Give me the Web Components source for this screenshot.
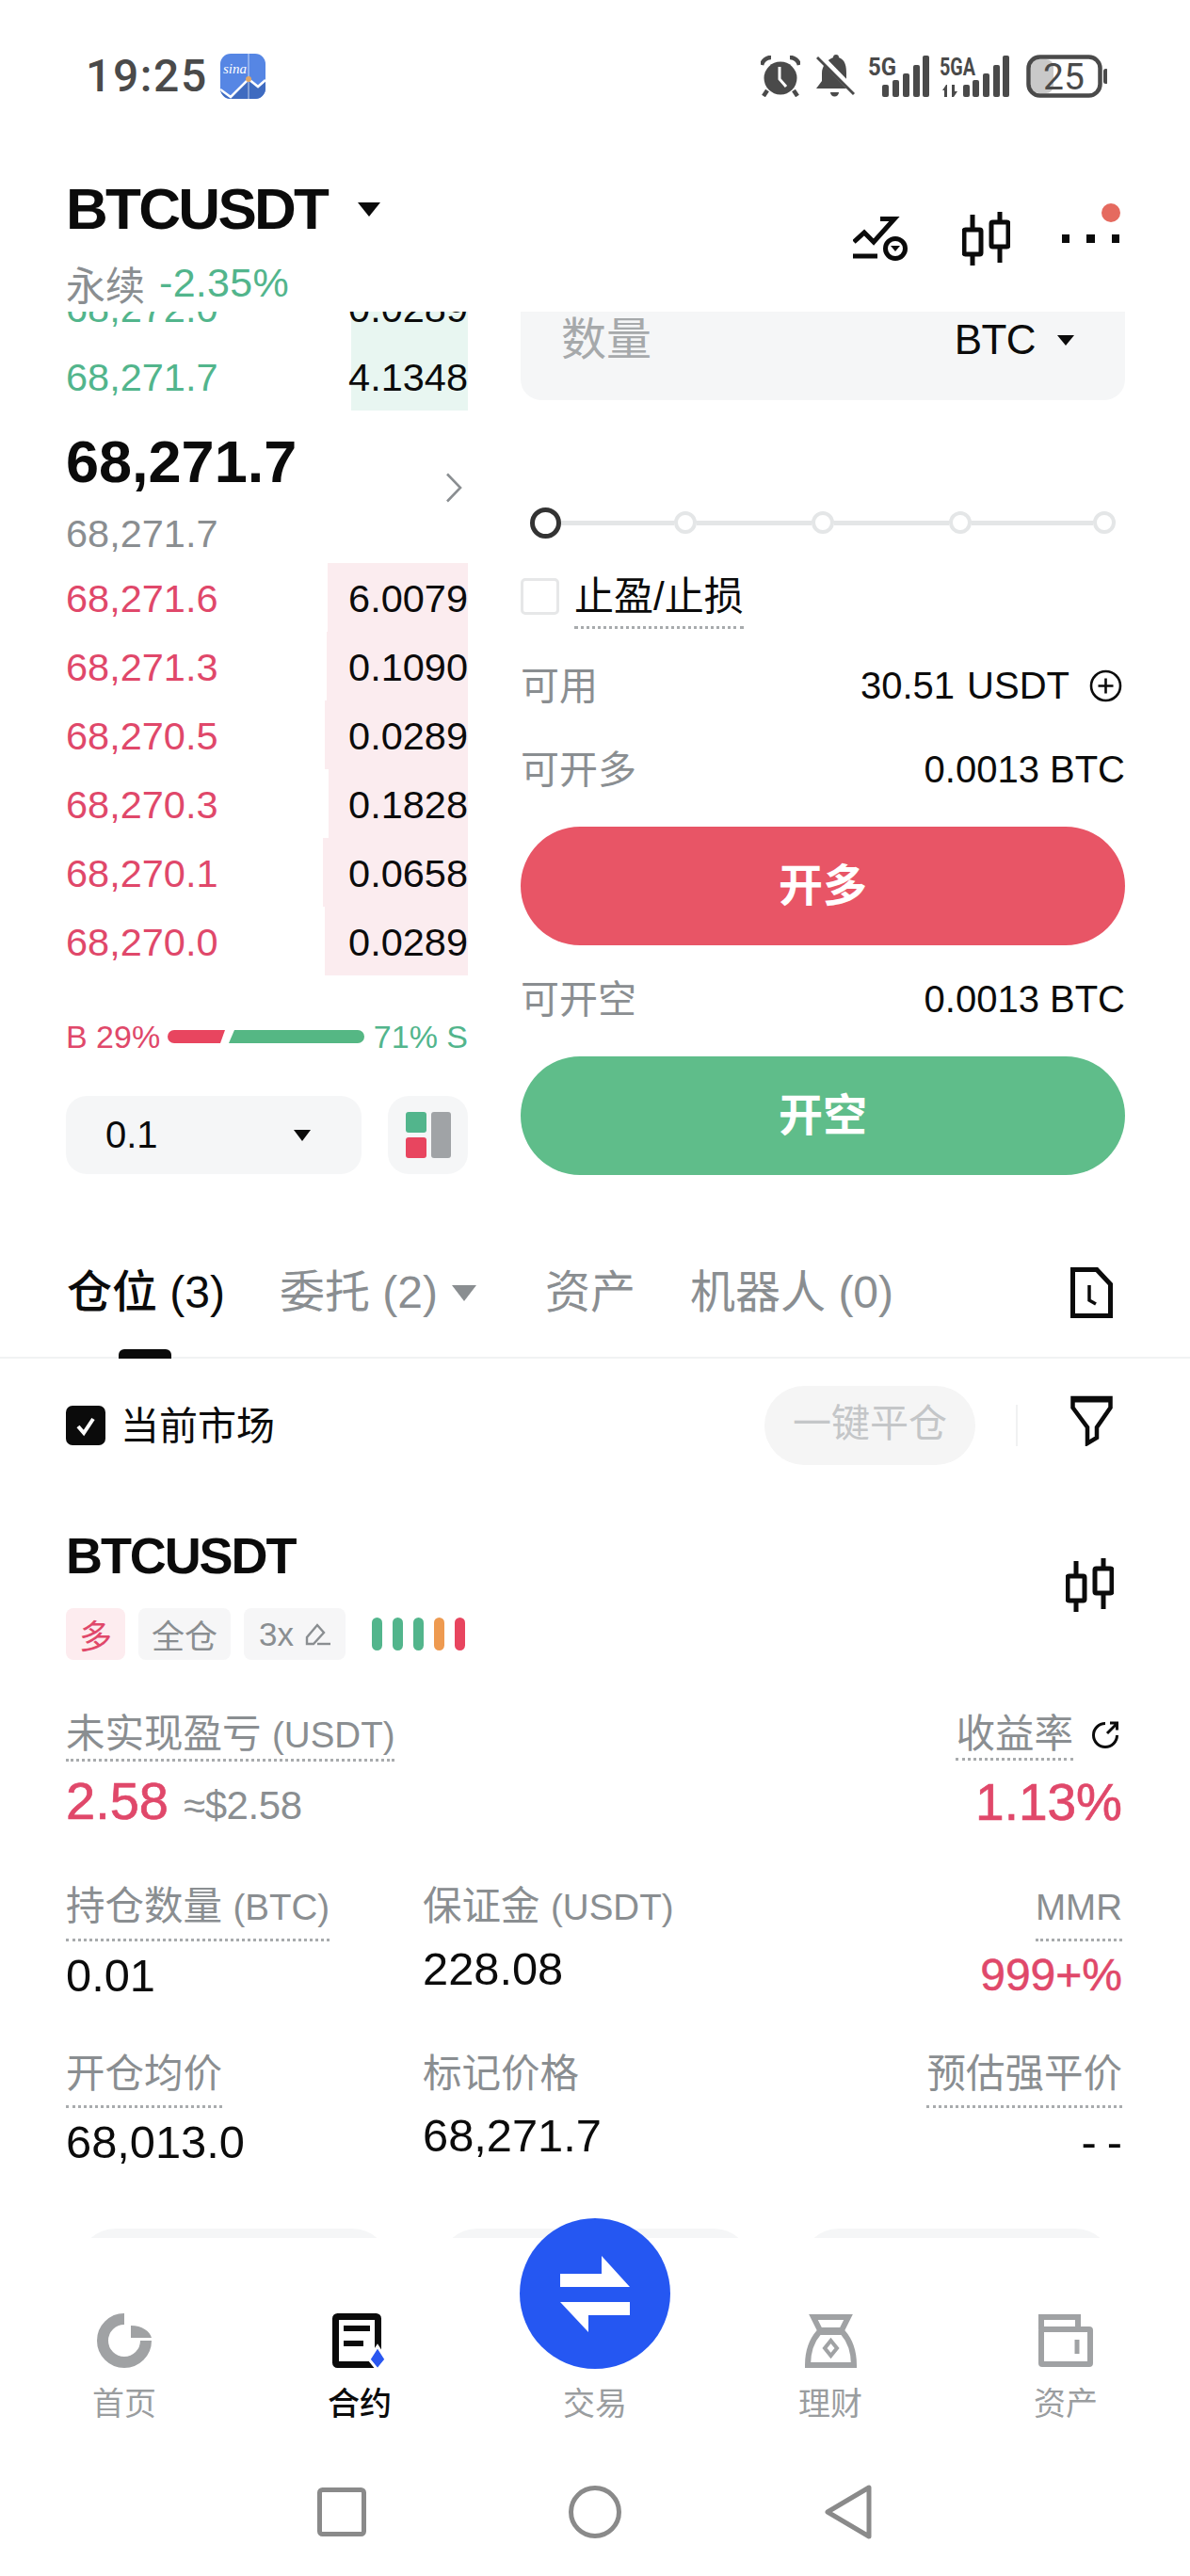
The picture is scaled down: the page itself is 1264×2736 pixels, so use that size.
<!DOCTYPE html>
<html lang="zh">
<head>
<meta charset="utf-8">
<title>BTCUSDT</title>
<style>
  html, body { margin: 0; background: #fff; }
  body {
    width: 1264px;
    height: 2736px;
    overflow: hidden;
    font-family: "Liberation Sans", "Noto Sans CJK SC", sans-serif;
    color: #0b0b0b;
  }
</style>
</head>
<body>
<trade-app></trade-app>

<script>
const GREY = "#8a8e91";
const RED = "#e0486a";
const GREEN = "#52b58c";

const ICONS = {
  chart: `<svg width="58" height="47" viewBox="0 0 58 47" fill="none" stroke="#0b0b0b" stroke-width="5">
    <polyline points="1,27 12,17 22,27 44,2.5 29,2.5"/><rect x="0" y="39.5" width="26" height="5" fill="#0b0b0b" stroke="none"/>
    <circle cx="45" cy="34" r="10.5"/><path d="M40 31h10l-5 6z" fill="#0b0b0b" stroke="none"/></svg>`,
  candle: `<svg width="51" height="57" viewBox="0 0 51 57" fill="none" stroke="#0b0b0b" stroke-width="5">
    <rect x="2" y="19" width="18" height="26" rx="1.5"/><rect x="31" y="11" width="18" height="26" rx="1.5"/>
    <path d="M11 3v16M11 45v12M40 0v11M40 37v17"/></svg>`,
  doc: `<svg width="45" height="54" viewBox="0 0 45 54" fill="none" stroke="#0b0b0b" stroke-width="5">
    <path d="M2.5 2.5H28L42.5 18V51.5H2.5Z"/><polyline points="20,19 20,35 27,39" stroke-width="3.5"/></svg>`,
  filter: `<svg width="45" height="54" viewBox="0 0 45 54" fill="none" stroke="#0b0b0b" stroke-width="4.5">
    <path d="M2.5 3H42.5V13L28 34V45L18 51V34L2.5 13Z"/><path d="M2 5H43" stroke-width="5"/></svg>`,
  check: `<svg width="42" height="42" viewBox="0 0 42 42"><rect width="42" height="42" rx="7" fill="#0b0b0b"/>
    <polyline points="13,22 19,29 29,14" fill="none" stroke="#fff" stroke-width="4"/></svg>`,
  pencil: `<svg width="27" height="24" viewBox="0 0 27 24" fill="none" stroke="${GREY}" stroke-width="2.4">
    <path d="M2 22V15L13 2L20 10L9 22Z"/><path d="M13 22H27"/></svg>`,
  refresh: `<svg width="30" height="30" viewBox="0 0 30 30" fill="none" stroke="#0b0b0b" stroke-width="3">
    <path d="M15 3.5A12.5 12.5 0 1 0 27.5 16"/><path d="M17 14L27 4M20 3H27.5V10.5"/></svg>`,
  plus: `<svg width="35" height="35" viewBox="0 0 35 35" fill="none" stroke="#0b0b0b" stroke-width="2.6">
    <circle cx="17.5" cy="17.5" r="15.5"/><path d="M17.5 9.5v16M9.5 17.5h16"/></svg>`,
  chevron: `<svg width="18" height="32" viewBox="0 0 18 32" fill="none" stroke="${GREY}" stroke-width="2.6"><path d="M2 1.5L16 16L2 30.5"/></svg>`,
  layout: `<svg width="48" height="49" viewBox="0 0 48 49"><rect width="22" height="22" rx="3" fill="${GREEN}"/>
    <rect y="27" width="22" height="22" rx="3" fill="#e8455f"/><rect x="27" width="21" height="49" rx="3" fill="#a0a3a6"/></svg>`,
  home: `<svg width="58" height="58" viewBox="0 0 58 58" fill="none" stroke="#a0a2a4" stroke-width="12">
    <path d="M29 6A23 23 0 1 0 52 29"/><path d="M36 13V26H58C56 19 48 13 36 13Z" fill="#a0a2a4" stroke="none"/></svg>`,
  contract: `<svg width="58" height="58" viewBox="0 0 58 58" fill="none">
    <rect x="3.5" y="3.5" width="45" height="51" rx="2" stroke="#0b0b0b" stroke-width="7"/>
    <rect x="12" y="13" width="28" height="6" fill="#0b0b0b"/><rect x="12" y="29" width="21" height="6" fill="#0b0b0b"/>
    <path d="M48 35L57 49L48 60L39 49Z" fill="#2a57f0" stroke="#fff" stroke-width="3"/></svg>`,
  bag: `<svg width="55" height="57" viewBox="0 0 55 57" fill="none" stroke="#a0a2a4" stroke-width="6">
    <path d="M9 3H46L39 17H16Z"/><path d="M15 19H40C48 28 52 38 52 54H3C3 38 7 28 15 19Z"/>
    <path d="M27.5 28L34 36L27.5 44L21 36Z" stroke-width="4"/></svg>`,
  wallet: `<svg width="58" height="56" viewBox="0 0 58 56" fill="none" stroke="#a0a2a4" stroke-width="6">
    <path d="M3 16V3H42V16"/><rect x="3" y="16" width="52" height="37" rx="1"/><path d="M41 27V42" stroke-width="5"/></svg>`,
  swap: `<svg width="74" height="81" viewBox="0 0 74 81" fill="#fff">
    <polygon points="44,0 74,33 0,33 0,19 44,19"/><polygon points="0,49 74,49 74,63 30,63 30,81"/></svg>`,
  square: `<svg width="52" height="52" viewBox="0 0 52 52" fill="none" stroke="#8a8a8a" stroke-width="5"><rect x="2.5" y="2.5" width="47" height="47" rx="3"/></svg>`,
  circle: `<svg width="56" height="56" viewBox="0 0 56 56" fill="none" stroke="#8a8a8a" stroke-width="5"><circle cx="28" cy="28" r="25.5"/></svg>`,
  back: `<svg width="50" height="58" viewBox="0 0 50 58" fill="none" stroke="#8a8a8a" stroke-width="5" stroke-linejoin="round"><path d="M47 3V55L3 29Z"/></svg>`,
  sina: `<svg width="48" height="48" viewBox="0 0 48 48"><defs><clipPath id="r"><rect width="48" height="48" rx="11"/></clipPath></defs>
    <g clip-path="url(#r)"><rect width="48" height="48" fill="#5686e4"/><path d="M0 38L11 46L30 27L40 35L48 28V48H0Z" fill="#3f6bc0"/>
    <polyline points="0,38 11,46 30,27 40,35 48,28" fill="none" stroke="#fff" stroke-width="2.5"/>
    <path d="M30 0V48" stroke="#fff" stroke-width="1" opacity=".7"/><circle cx="30" cy="27" r="3" fill="#e0a868"/>
    <text x="3" y="21" font-family="Liberation Serif" font-style="italic" font-size="15" fill="#fff">sina</text></g></svg>`,
  alarm: `<svg width="42" height="44" viewBox="0 0 42 44"><circle cx="21" cy="24" r="17.5" fill="#4a4a4a"/>
    <path d="M1 10A10 10 0 0 1 11 2M41 10A10 10 0 0 0 31 2M7 37L3 43M35 37L39 43" fill="none" stroke="#4a4a4a" stroke-width="4.5"/>
    <polyline points="20,12 20,25 27,33" fill="none" stroke="#fff" stroke-width="3"/></svg>`,
  bell: `<svg width="41" height="46" viewBox="0 0 41 46"><path d="M18 3A3 3 0 0 1 24 3C31 6 32 12 32 20V28L38 36H0L6 28V20C6 12 11 6 18 3ZM15 40H24A4.500 4.500 0 0 1 15 40Z" fill="#4a4a4a"/>
    <path d="M3 1L41 40" stroke="#fff" stroke-width="7"/><path d="M1 3L40 42" stroke="#4a4a4a" stroke-width="3"/></svg>`,
  signal5g: `<svg width="65" height="46" viewBox="0 0 65 46" fill="#4a4a4a">
    <text x="0" y="22" font-family="Roboto" font-weight="700" font-size="25" textLength="30" lengthAdjust="spacingAndGlyphs">5G</text>
    <rect x="15" y="32" width="7" height="13" rx="2"/><rect x="26" y="27" width="7" height="18" rx="2"/><rect x="37" y="20" width="7" height="25" rx="2"/><rect x="48" y="11" width="7" height="34" rx="2"/><rect x="58" y="1" width="7" height="44" rx="2"/></svg>`,
  signal5ga: `<svg width="74" height="46" viewBox="0 0 74 46" fill="#4a4a4a">
    <text x="0" y="22" font-family="Roboto" font-weight="700" font-size="25" textLength="38" lengthAdjust="spacingAndGlyphs">5GA</text>
    <path d="M3 38l4-6 1 0v13h-3v-7zM13 32h3v7h3l-4 6h-2z"/>
    <rect x="25" y="32" width="7" height="13" rx="2"/><rect x="35" y="27" width="7" height="18" rx="2"/><rect x="46" y="20" width="7" height="25" rx="2"/><rect x="57" y="11" width="7" height="34" rx="2"/><rect x="67" y="1" width="7" height="44" rx="2"/></svg>`,
  battery: `<svg width="86" height="46" viewBox="0 0 86 46" fill="none"><rect x="5" y="5" width="24" height="36" rx="8" fill="#c9c9c9"/>
    <rect x="2.500" y="2.500" width="76" height="41" rx="12" stroke="#4a4a4a" stroke-width="4.500"/><rect x="82" y="15" width="5" height="16" rx="2.500" fill="#4a4a4a"/>
    <text x="40" y="37" text-anchor="middle" font-family="Roboto" font-size="39" fill="#4a4a4a">25</text></svg>`,
};

class UiIcon extends HTMLElement {
  constructor() {
    super();
    this.attachShadow({ mode: "open" }).innerHTML = `
      <style>
        :host { display: inline-flex; flex: none; line-height: 0; }
      </style>
      ${ICONS[this.getAttribute("name")] || ""}
    `;
  }
}
customElements.define("ui-icon", UiIcon);

class StatusBar extends HTMLElement {
  constructor() {
    super();
    this.attachShadow({ mode: "open" }).innerHTML = `
      <style>
        :host { display: flex; align-items: center; height: 162px; padding: 0 88px 0 91px; }
        .time { font: 500 48px/50px Roboto, sans-serif; letter-spacing: 1.6px; color: #4a4a4a; margin-right: 13px; }
        .right { margin-left: auto; display: flex; align-items: center; }
      </style>
      <span class="time">19:25</span>
      <ui-icon name="sina"></ui-icon>
      <div class="right">
        <ui-icon name="alarm" style="margin-right:17px"></ui-icon>
        <ui-icon name="bell" style="margin-right:14px"></ui-icon>
        <ui-icon name="signal5g" style="margin-right:11px"></ui-icon>
        <ui-icon name="signal5ga" style="margin-right:18px"></ui-icon>
        <ui-icon name="battery"></ui-icon>
      </div>
    `;
  }
}
customElements.define("status-bar", StatusBar);

class MarketHeader extends HTMLElement {
  constructor() {
    super();
    this.attachShadow({ mode: "open" }).innerHTML = `
      <style>
        :host { position: relative; z-index: 1; display: flex; justify-content: space-between; height: 169px; padding: 25px 75px 0 70px; box-sizing: border-box; }
        .title { display: flex; align-items: center; height: 70px; font-size: 62px; line-height: 70px; font-weight: 700; letter-spacing: -2.7px; }
        .caret { width: 0; height: 0; margin-left: 33px; border: 12px solid transparent; border-top: 15px solid #0b0b0b; border-bottom: 0; }
        .sub { display: flex; align-items: center; height: 40px; margin-top: 23px; font-size: 42px; color: ${GREY}; }
        .sub b { font-size: 43px; font-weight: 400; color: ${GREEN}; margin-left: 15px; letter-spacing: .3px; }
        .tools { display: flex; align-items: center; height: 57px; margin-top: 38px; }
        .more { position: relative; display: flex; gap: 18px; margin-left: 55px; }
        .more i { width: 8.5px; height: 8.5px; background: #0b0b0b; }
        .more .dot { position: absolute; right: -1px; top: -33px; width: 20px; height: 20px; border-radius: 50%; background: #e56a5f; }
      </style>
      <div>
        <div class="title">BTCUSDT<span class="caret"></span></div>
        <div class="sub">永续<b>-2.35%</b></div>
      </div>
      <div class="tools">
        <ui-icon name="chart" style="margin-right:58px"></ui-icon>
        <ui-icon name="candle"></ui-icon>
        <div class="more"><i></i><i></i><i></i><span class="dot"></span></div>
      </div>
    `;
  }
}
customElements.define("market-header", MarketHeader);

class OrderRow extends HTMLElement {
  constructor() {
    super();
    const bid = this.getAttribute("side") === "bid";
    this.attachShadow({ mode: "open" }).innerHTML = `
      <style>
        :host {
          display: flex; justify-content: space-between; align-items: center;
          height: 73px; box-sizing: border-box; padding-top: 2px; font-size: 41.5px; line-height: 70px;
          color: ${bid ? GREEN : RED};
          background: linear-gradient(to left, ${bid ? "#e8f6f1" : "#fbecef"} ${this.getAttribute("depth")}px, transparent 0);
        }
        .qty { color: #0b0b0b; }
      </style>
      <span><slot></slot></span>
      <span class="qty">${this.getAttribute("qty")}</span>
    `;
  }
}
customElements.define("order-row", OrderRow);

class OrderBook extends HTMLElement {
  constructor() {
    super();
    this.attachShadow({ mode: "open" }).innerHTML = `
      <style>
        :host { display: block; margin-top: -41px; }
        .mid { display: grid; grid-template-columns: 1fr auto; height: 162px; box-sizing: border-box; padding: 19px 6px 0 0; }
        .last { font-size: 63px; line-height: 70px; font-weight: 700; }
        .mark { font-size: 41.5px; line-height: 50px; color: ${GREY}; margin-top: 17px; }
        ui-icon { margin-top: 47px; }
        .ratio { display: flex; align-items: center; height: 40px; margin-top: 45px; font-size: 34px; }
        .ratio .b { color: ${RED}; width: 104px; }
        .ratio .s { color: ${GREEN}; margin-left: auto; }
        .bars { display: flex; gap: 4px; margin-left: 4px; }
        .bars i { display: block; height: 14px; }
        .bars .red { width: 61px; background: #e8455f; border-radius: 7px 0 0 7px; clip-path: polygon(0 0, 100% 0, calc(100% - 5px) 100%, 0 100%); }
        .bars .green { width: 144px; background: #55b784; border-radius: 0 7px 7px 0; clip-path: polygon(6px 0, 100% 0, 100% 100%, 0 100%); }
        .controls { display: flex; gap: 28px; margin-top: 43px; }
        .select { display: flex; align-items: center; justify-content: space-between; width: 314px; height: 83px; box-sizing: border-box; padding: 0 54px 0 42px; border-radius: 22px; background: #f5f6f7; font-size: 40px; }
        .select i { width: 0; height: 0; border: 9px solid transparent; border-top: 12px solid #0b0b0b; border-bottom: 0; }
        .mode { display: flex; align-items: center; justify-content: center; width: 85px; height: 83px; border-radius: 22px; background: #f5f6f7; }
        .mode ui-icon { margin: 0; }
      </style>
      <order-row side="bid" depth="124" qty="0.0289">68,272.0</order-row>
      <order-row side="bid" depth="124" qty="4.1348">68,271.7</order-row>
      <div class="mid">
        <div>
          <div class="last">68,271.7</div>
          <div class="mark">68,271.7</div>
        </div>
        <ui-icon name="chevron"></ui-icon>
      </div>
      <order-row depth="149" qty="6.0079">68,271.6</order-row>
      <order-row depth="150" qty="0.1090">68,271.3</order-row>
      <order-row depth="152" qty="0.0289">68,270.5</order-row>
      <order-row depth="148" qty="0.1828">68,270.3</order-row>
      <order-row depth="154" qty="0.0658">68,270.1</order-row>
      <order-row depth="152" qty="0.0289">68,270.0</order-row>
      <div class="ratio">
        <span class="b">B 29%</span>
        <span class="bars"><i class="red"></i><i class="green"></i></span>
        <span class="s">71% S</span>
      </div>
      <div class="controls">
        <div class="select">0.1<i></i></div>
        <div class="mode"><ui-icon name="layout"></ui-icon></div>
      </div>
    `;
  }
}
customElements.define("order-book", OrderBook);

class OrderForm extends HTMLElement {
  constructor() {
    super();
    this.attachShadow({ mode: "open" }).innerHTML = `
      <style>
        :host { display: block; font-size: 41px; }
        .qty { display: flex; justify-content: space-between; height: 124px; margin-top: -30px; box-sizing: border-box; padding: 36px 54px 0 43px; border-radius: 22px; background: #f5f6f7; line-height: 48px; }
        .qty .ph { font-size: 48px; color: #a6a9ab; }
        .qty .unit { display: flex; align-items: center; height: 48px; font-size: 44px; letter-spacing: -.6px; }
        .qty .unit i { width: 0; height: 0; margin-left: 23px; border: 9px solid transparent; border-top: 11px solid #0b0b0b; border-bottom: 0; }
        .slider { display: flex; align-items: center; height: 40px; margin-top: 110px; padding: 0 10px; }
        .slider i { height: 5px; background: #e4e6e7; }
        .slider b { width: 24px; height: 24px; flex: none; box-sizing: border-box; border: 4px solid #e4e6e7; border-radius: 50%; }
        .slider b:first-child { width: 33px; height: 33px; border: 5px solid #333; }
        .tpsl { display: flex; height: 40px; margin-top: 37px; }
        .box { width: 41px; height: 39px; box-sizing: border-box; border: 3px solid #e6e7e8; border-radius: 5px; margin: 2px 16px 0 0; }
        .tpsl span { font-size: 42px; line-height: 44px; height: 44px; padding-bottom: 9px; border-bottom: 3px dotted #a8abad; }
        .row { display: flex; justify-content: space-between; align-items: center; height: 50px; color: ${GREY}; }
        .row .lab { margin-bottom: 6px; }
        .row .val { display: flex; align-items: center; color: #0b0b0b; font-size: 40px; }
        .row .unit { margin-left: 13px; }
        .row ui-icon { margin: 0 3px 0 21px; }
        .cta { height: 126px; border-radius: 63px; color: #fff; font-size: 47px; font-weight: 700; line-height: 126px; text-align: center; }
        .long { background: #e85566; margin-top: 36px; }
        .short { background: #5fbd8a; margin-top: 36px; }
      </style>
      <div class="qty"><span class="ph">数量</span><span class="unit">BTC<i></i></span></div>
      <div class="slider"><b></b><i style="width:120px"></i><b></b><i style="width:122px"></i><b></b><i style="width:122px"></i><b></b><i style="width:129px"></i><b></b></div>
      <div class="tpsl"><div class="box"></div><span>止盈/止损</span></div>
      <div class="row" style="margin-top:51px"><span class="lab">可用</span><span class="val">30.51<span class="unit">USDT</span><ui-icon name="plus"></ui-icon></span></div>
      <div class="row" style="margin-top:39px"><span class="lab">可开多</span><span class="val">0.0013 BTC</span></div>
      <div class="cta long">开多</div>
      <div class="row" style="margin-top:32px"><span class="lab">可开空</span><span class="val">0.0013 BTC</span></div>
      <div class="cta short">开空</div>
    `;
  }
}
customElements.define("order-form", OrderForm);

class PositionTabs extends HTMLElement {
  constructor() {
    super();
    this.attachShadow({ mode: "open" }).innerHTML = `
      <style>
        :host { position: relative; display: flex; height: 123px; box-sizing: border-box; padding: 23px 82px 0 71px; border-bottom: 2px solid #f1f2f3; font-size: 48px; line-height: 60px; color: ${GREY}; }
        .tab { height: 60px; margin-right: 58px; }
        .on { color: #0b0b0b; font-weight: 500; }
        .drop { display: flex; align-items: center; }
        .drop i { width: 0; height: 0; margin: 0 15px; border: 13px solid transparent; border-top: 17px solid ${GREY}; border-bottom: 0; }
        .bar { position: absolute; left: 126px; bottom: -2px; width: 56px; height: 10px; background: #0b0b0b; border-radius: 6px 6px 0 0; }
        ui-icon { margin: 3px 0 0 auto; align-self: flex-start; }
      </style>
      <span class="tab on">仓位 (3)</span>
      <span class="tab drop">委托 (2)<i></i></span>
      <span class="tab">资产</span>
      <span class="tab">机器人 (0)</span>
      <ui-icon name="doc"></ui-icon>
      <span class="bar"></span>
    `;
  }
}
customElements.define("position-tabs", PositionTabs);

class FilterBar extends HTMLElement {
  constructor() {
    super();
    this.attachShadow({ mode: "open" }).innerHTML = `
      <style>
        :host { display: flex; align-items: center; height: 142px; padding: 0 82px 0 70px; font-size: 41px; }
        .label { margin: 0 0 6px 16px; }
        .close { margin-left: auto; width: 224px; height: 84px; border-radius: 42px; background: #f5f5f5; color: #c4c6c8; line-height: 80px; text-align: center; }
        .sep { width: 2px; height: 44px; background: #f0f1f2; margin: 0 56px 0 43px; }
        .funnel { margin-top: -10px; }
      </style>
      <ui-icon name="check"></ui-icon>
      <span class="label">当前市场</span>
      <span class="close">一键平仓</span>
      <span class="sep"></span>
      <ui-icon class="funnel" name="filter"></ui-icon>
    `;
  }
}
customElements.define("filter-bar", FilterBar);

class StatCell extends HTMLElement {
  constructor() {
    super();
    this.attachShadow({ mode: "open" }).innerHTML = `
      <style>
        :host { display: flex; flex-direction: column; align-items: flex-start; }
        :host([align="right"]) { align-items: flex-end; }
        .head { display: flex; align-items: flex-start; }
        .label { font-size: 41.5px; line-height: 48px; color: ${GREY}; padding-bottom: 5px; white-space: nowrap; }
        :host([dotted]) .label { padding-bottom: 9px; border-bottom: 3px dotted #a8abad; }
        :host([tight]) .label { padding-bottom: 1px; }
        .value { font-size: 48.8px; line-height: 54px; margin-top: 9px; white-space: nowrap; }
        :host([tight]) .value { margin-top: 17px; }
        :host([tone="red"]) .value { font-size: 48px; color: ${RED}; -webkit-text-stroke: .5px ${RED}; }
        :host([tone="red"][tight]) .value { font-size: 55px; -webkit-text-stroke: .7px ${RED}; }
      </style>
      <div class="head"><div class="label"><slot name="label"></slot></div><slot name="aside"></slot></div>
      <div class="value"><slot></slot></div>
    `;
  }
}
customElements.define("stat-cell", StatCell);

class PositionCard extends HTMLElement {
  constructor() {
    super();
    this.attachShadow({ mode: "open" }).innerHTML = `
      <style>
        :host { display: block; height: 792px; overflow: hidden; padding: 37px 72px 0 70px; box-sizing: border-box; }
        .head { display: flex; justify-content: space-between; height: 60px; }
        .sym { font-size: 54px; line-height: 60px; font-weight: 700; letter-spacing: -2.100px; }
        .head ui-icon { margin: 33px 9px 0 0; }
        .tags { display: flex; align-items: center; margin-top: 26px; font-size: 35px; }
        .tag { display: flex; align-items: center; justify-content: center; height: 55px; margin-right: 14px; border-radius: 8px; background: #f6f6f7; color: ${GREY}; }
        .tag.long { width: 63px; background: #fdecef; color: ${RED}; }
        .tag.mode { width: 98px; }
        .tag.lev { width: 108px; gap: 12px; }
        .risk { display: flex; gap: 11px; margin-left: 14px; }
        .risk i { width: 11px; height: 35px; border-radius: 6px; background: ${GREEN}; }
        .pnl { display: flex; justify-content: space-between; margin-top: 55px; height: 183px; }
        .big { display: inline-block; margin-top: -6px; font-size: 56px; line-height: 60px; color: ${RED}; -webkit-text-stroke: .7px ${RED}; }
        .usd { font-size: 42px; color: ${GREY}; margin-left: 16px; -webkit-text-stroke: 0; letter-spacing: -.4px; }
        .lat { font-size: 38.500px; }
        .refresh { margin: 9px 3px 0 19px; }
        .grid { display: grid; grid-template-columns: 379px 1fr auto; }
        .r1 { height: 178px; }
        .stats { height: 366px; }
        .dash { display: inline-block; letter-spacing: 11px; margin-right: -11px; }
        .ghost { display: flex; gap: 53px; margin-left: 13px; }
        .ghost i { flex: none; width: 331px; height: 80px; border-radius: 40px; background: #f5f6f7; }
      </style>
      <div class="head">
        <span class="sym">BTCUSDT</span>
        <ui-icon name="candle"></ui-icon>
      </div>
      <div class="tags">
        <span class="tag long">多</span>
        <span class="tag mode">全仓</span>
        <span class="tag lev">3x<ui-icon name="pencil"></ui-icon></span>
        <span class="risk"><i></i><i></i><i></i><i style="background:#ee9a50"></i><i style="background:#e8455f"></i></span>
      </div>
      <div class="pnl">
        <stat-cell dotted tight>
          <span slot="label">未实现盈亏 <span class="lat">(USDT)</span></span>
          <span class="big">2.58<span class="usd">≈$2.58</span></span>
        </stat-cell>
        <stat-cell dotted tight align="right" tone="red">
          <span slot="label">收益率</span>
          <ui-icon class="refresh" slot="aside" name="refresh"></ui-icon>
          1.13%
        </stat-cell>
      </div>
      <div class="stats">
        <div class="grid r1">
          <stat-cell dotted><span slot="label">持仓数量 <span class="lat">(BTC)</span></span>0.01</stat-cell>
          <stat-cell><span slot="label">保证金 <span class="lat">(USDT)</span></span>228.08</stat-cell>
          <stat-cell dotted align="right" tone="red"><span slot="label" class="lat">MMR</span>999+%</stat-cell>
        </div>
        <div class="grid">
          <stat-cell dotted><span slot="label">开仓均价</span>68,013.0</stat-cell>
          <stat-cell><span slot="label">标记价格</span>68,271.7</stat-cell>
          <stat-cell dotted align="right"><span slot="label">预估强平价</span><span class="dash">--</span></stat-cell>
        </div>
      </div>
      <div class="ghost"><i></i><i></i><i></i></div>
    `;
  }
}
customElements.define("position-card", PositionCard);

class NavItem extends HTMLElement {
  constructor() {
    super();
    this.attachShadow({ mode: "open" }).innerHTML = `
      <style>
        :host { display: flex; flex-direction: column; align-items: center; color: #9a9d9f; font-size: 34px; line-height: 40px; }
        :host([active]) { color: #0b0b0b; font-weight: 500; }
        .icon { display: flex; justify-content: center; align-items: center; height: 58px; margin-bottom: 18px; }
      </style>
      <div class="icon"><slot name="icon"></slot></div>
      <slot></slot>
    `;
  }
}
customElements.define("nav-item", NavItem);

class BottomNav extends HTMLElement {
  constructor() {
    super();
    this.attachShadow({ mode: "open" }).innerHTML = `
      <style>
        :host { position: relative; display: grid; grid-template-columns: repeat(5, 250px); height: 233px; box-sizing: border-box; padding: 80px 7px 0; background: #fff; }
        .trade { position: absolute; left: 552px; top: -21px; width: 160px; height: 160px; border-radius: 50%; background: #2557f2; display: flex; align-items: center; justify-content: center; }
      </style>
      <nav-item><ui-icon slot="icon" name="home"></ui-icon>首页</nav-item>
      <nav-item active><ui-icon slot="icon" name="contract"></ui-icon>合约</nav-item>
      <nav-item>交易</nav-item>
      <nav-item><ui-icon slot="icon" name="bag"></ui-icon>理财</nav-item>
      <nav-item><ui-icon slot="icon" name="wallet"></ui-icon>资产</nav-item>
      <div class="trade"><ui-icon name="swap"></ui-icon></div>
    `;
  }
}
customElements.define("bottom-nav", BottomNav);

class SystemNav extends HTMLElement {
  constructor() {
    super();
    this.attachShadow({ mode: "open" }).innerHTML = `
      <style>
        :host { display: grid; grid-template-columns: repeat(3, 269px); justify-content: center; align-items: center; height: 116px; }
        ui-icon { justify-self: center; }
      </style>
      <ui-icon name="square"></ui-icon>
      <ui-icon name="circle"></ui-icon>
      <ui-icon name="back"></ui-icon>
    `;
  }
}
customElements.define("system-nav", SystemNav);

class TradeApp extends HTMLElement {
  constructor() {
    super();
    this.attachShadow({ mode: "open" }).innerHTML = `
      <style>
        :host { display: block; width: 1264px; height: 2736px; overflow: hidden; }
        .panel { display: grid; grid-template-columns: 427px 642px; column-gap: 56px; height: 989px; padding: 0 69px 0 70px; overflow: hidden; }
      </style>
      <status-bar></status-bar>
      <market-header></market-header>
      <div class="panel">
        <order-book></order-book>
        <order-form></order-form>
      </div>
      <position-tabs></position-tabs>
      <filter-bar></filter-bar>
      <position-card></position-card>
      <bottom-nav></bottom-nav>
      <system-nav></system-nav>
    `;
  }
}
customElements.define("trade-app", TradeApp);
</script>
</body>
</html>
